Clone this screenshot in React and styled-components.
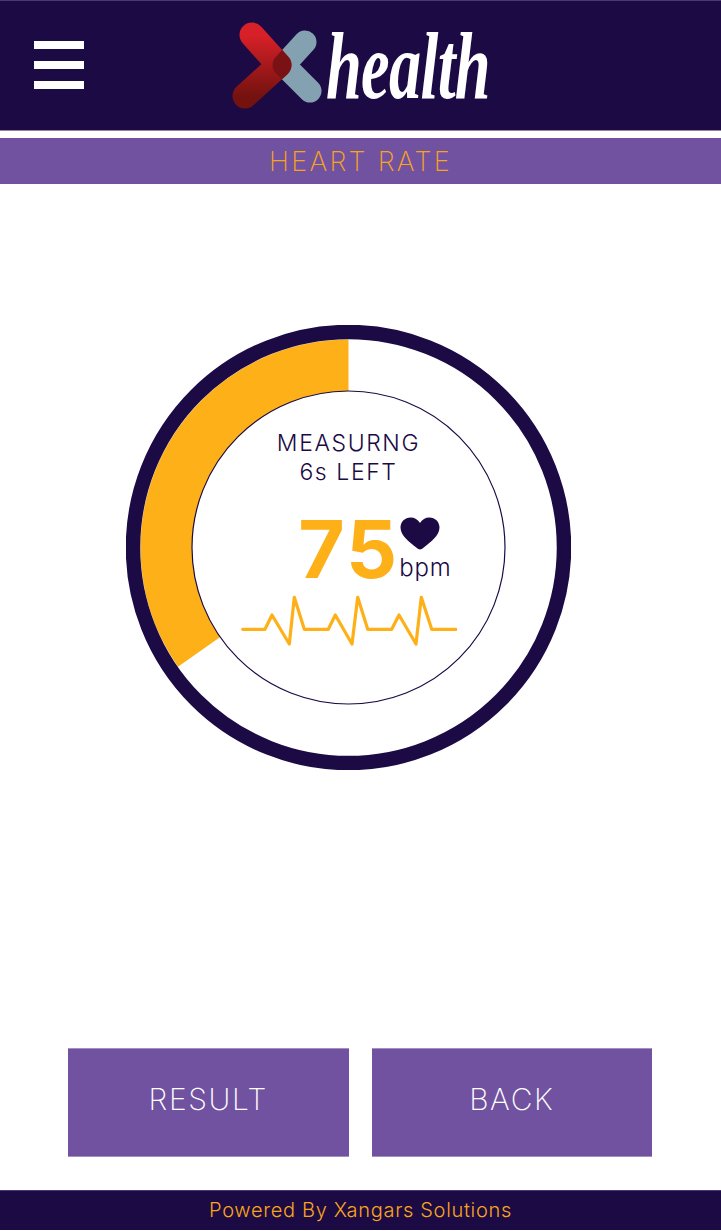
import React from "react";
import styled, { createGlobalStyle } from "styled-components";

const NAVY = "#1c0a45";
const PURPLE = "#7152a0";
const ORANGE = "#fdb017";
const SANS = '"Inter", "Liberation Sans", sans-serif';

const Global = createGlobalStyle`
  html, body { margin: 0; padding: 0; background: #fff; }
  * { box-sizing: border-box; }
`;

const Page = styled.div`
  width: 721px;
  height: 1231px;
  display: flex;
  flex-direction: column;
  font-family: ${SANS};
  overflow: hidden;
`;

const Header = styled.header`
  height: 131px;
  flex: none;
  background: ${NAVY};
  border-top: 1px solid #4b3a6f;
  border-bottom: 1px solid #8f84a8;
  display: flex;
  padding-left: 34px;
`;

const Burger = styled.div`
  width: 50px;
  margin-top: 40px;
  display: flex;
  flex-direction: column;
  gap: 12px;
`;

const BurgerBar = styled.span`
  height: 8px;
  background: #fff;
`;

const Logo = styled.div`
  margin-left: 148px;
  margin-top: 20px;
  display: flex;
  align-items: flex-start;
`;

const LogoMark = styled.svg`
  width: 96px;
  height: 90px;
  flex: none;
`;

const LogoWord = styled.span`
  margin-left: -2px;
  margin-top: -5px;
  font-family: "Liberation Serif", serif;
  font-style: italic;
  font-weight: 700;
  font-size: 96px;
  line-height: 100px;
  letter-spacing: -1px;
  color: #fff;
  transform: scaleX(0.67);
  transform-origin: left center;
`;

const TitleBar = styled.div`
  margin-top: 7px;
  height: 46px;
  flex: none;
  background: ${PURPLE};
  display: flex;
  align-items: center;
  justify-content: center;
  color: #f9a51a;
  font-size: 27px;
  font-weight: 200;
  letter-spacing: 2.3px;
`;

const Main = styled.main`
  flex: 1;
  display: flex;
  flex-direction: column;
  padding: 141px 0 33px 126px;
`;

const Dial = styled.div`
  position: relative;
  width: 445px;
  height: 445px;
  display: flex;
  flex-direction: column;
  align-items: center;
  padding-top: 104px;
  color: ${NAVY};
`;

const DialArt = styled.svg`
  position: absolute;
  inset: 0;
  width: 445px;
  height: 445px;
`;

const Status = styled.div`
  position: relative;
  font-size: 23px;
  font-weight: 300;
  line-height: 29px;
  letter-spacing: 1.6px;
  text-align: center;
`;

const Readout = styled.div`
  position: relative;
  display: flex;
  margin-top: 24px;
  margin-left: 53px;
  height: 76px;
`;

const Value = styled.div`
  font-size: 80px;
  font-weight: 700;
  line-height: 76px;
  letter-spacing: 2px;
  color: ${ORANGE};
`;

const Unit = styled.div`
  display: flex;
  flex-direction: column;
  align-items: flex-start;
`;

const Heart = styled.svg`
  width: 40px;
  height: 33px;
  margin-top: 6px;
  margin-left: 1px;
`;

const Bpm = styled.div`
  font-size: 24px;
  font-weight: 300;
  line-height: 30px;
  letter-spacing: 0.9px;
  margin-top: 3px;
`;

const Wave = styled.svg`
  position: relative;
  width: 216px;
  height: 52px;
  margin-top: 8px;
`;

const Actions = styled.div`
  margin-top: auto;
  margin-left: -58px;
  display: flex;
  gap: 23px;
`;

const Action = styled.button`
  width: 280.5px;
  height: 109px;
  border: 0;
  border-top: 1px solid #a48fc4;
  border-bottom: 1px solid #a48fc4;
  background: ${PURPLE};
  color: #fff;
  font-family: ${SANS};
  font-size: 30px;
  font-weight: 200;
  letter-spacing: 1.6px;
  padding: 0 0 8px;
`;

const Footer = styled.footer`
  height: 40px;
  margin-bottom: 1px;
  flex: none;
  background: ${NAVY};
  border-top: 1px solid #4b3a6f;
  display: flex;
  align-items: center;
  justify-content: center;
  color: #f9a51a;
  font-size: 20px;
  font-weight: 300;
  letter-spacing: 0.68px;
  padding-bottom: 2px;
`;

const R = 182;
const CIRC = 2 * Math.PI * R;
const progress = 124.9 / 360;

const wave = [
  [65, 628], [132, 628], [153, 585], [205, 672], [220, 532], [250, 628], [322, 628],
  [343, 585], [393, 672], [410, 532], [440, 628], [512, 628], [534, 585], [585, 672],
  [601, 532], [632, 628], [705, 628],
].map(([x, y]) => `${(x / 3 + 220 - 240).toFixed(1)},${(y / 3 + 420 - 595).toFixed(1)}`).join(" ");

export default function App() {
  return (
    <Page>
      <Global />
      <Header>
        <Burger>
          <BurgerBar />
          <BurgerBar />
          <BurgerBar />
        </Burger>
        <Logo>
          <LogoMark viewBox="0 0 96 90">
            <defs>
              <linearGradient id="xRed" x1="0" y1="0" x2="0" y2="1">
                <stop offset="0" stopColor="#d82028" />
                <stop offset="1" stopColor="#74120f" />
              </linearGradient>
              <mask id="xBlue" maskUnits="userSpaceOnUse" x="0" y="0" width="96" height="90">
                <polyline points="73,21 52,44 78,70" fill="none" stroke="#fff" strokeWidth="23" strokeLinecap="round" strokeLinejoin="round" />
              </mask>
            </defs>
            <polyline points="73,21 52,44 78,70" fill="none" stroke="#84a1b1" strokeWidth="23" strokeLinecap="round" strokeLinejoin="round" />
            <path d="M20 14 L47 44 L13 75" fill="none" stroke="url(#xRed)" strokeWidth="25" strokeLinecap="round" strokeLinejoin="round" />
            <path d="M20 14 L47 44 L13 75" fill="none" stroke="#7a1215" strokeWidth="25" strokeLinecap="round" strokeLinejoin="round" mask="url(#xBlue)" />
          </LogoMark>
          <LogoWord>health</LogoWord>
        </Logo>
      </Header>
      <TitleBar>HEART RATE</TitleBar>
      <Main>
        <Dial>
          <DialArt viewBox="0 0 445 445">
            <circle
              cx="222.5"
              cy="222.5"
              r={R}
              fill="none"
              stroke={ORANGE}
              strokeWidth="52"
              strokeDasharray={`${CIRC * progress} ${CIRC}`}
              transform="rotate(-90 222.5 222.5) scale(1 -1) translate(0 -445)"
            />
            <circle cx="222.5" cy="222.5" r="215.5" fill="none" stroke={NAVY} strokeWidth="14.5" />
            <circle cx="222.5" cy="222.5" r="156.5" fill="#fff" stroke={NAVY} strokeWidth="1.2" />
          </DialArt>
          <Status>
            MEASURNG
            <br />
            6s LEFT
          </Status>
          <Readout>
            <Value>75</Value>
            <Unit>
              <Heart viewBox="0 0 40 33">
                <path
                  d="M20 32.5 C18.8 32.5 17.8 31.8 16.6 30.8 C10 25.6 0.5 19 0.5 10.6 C0.5 4.8 5 0.5 10.6 0.5 C14.5 0.5 18 2.5 20 6 C22 2.5 25.5 0.5 29.4 0.5 C35 0.5 39.5 4.8 39.5 10.6 C39.5 19 30 25.6 23.4 30.8 C22.2 31.8 21.2 32.5 20 32.5 Z"
                  fill={NAVY}
                />
              </Heart>
              <Bpm>bpm</Bpm>
            </Unit>
          </Readout>
          <Wave viewBox="0 0 216 52">
            <polyline
              points={wave}
              fill="none"
              stroke={ORANGE}
              strokeWidth="3.2"
              strokeLinecap="round"
              strokeLinejoin="round"
            />
          </Wave>
        </Dial>
        <Actions>
          <Action>RESULT</Action>
          <Action>BACK</Action>
        </Actions>
      </Main>
      <Footer>Powered By Xangars Solutions</Footer>
    </Page>
  );
}
